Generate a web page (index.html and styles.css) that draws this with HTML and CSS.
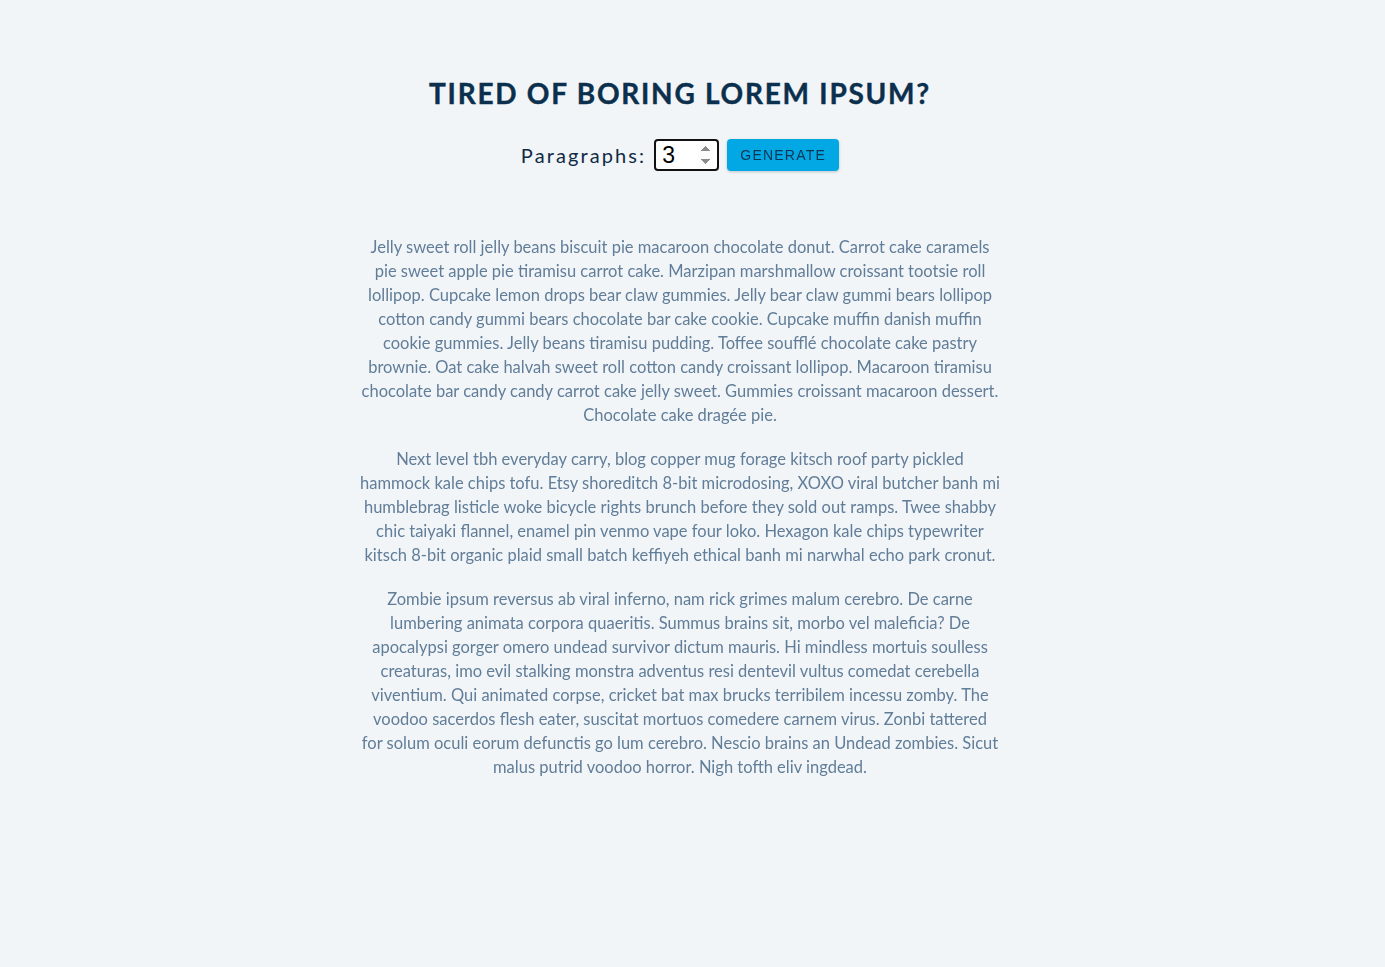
FILE: index.html
```html
<!DOCTYPE html>
<html lang="en">
<head>
<meta charset="utf-8">
<title>Lorem Ipsum Generator</title>
<link rel="stylesheet" href="styles.css">
</head>
<body>
<section class="section-center">
  <h3 class="title">tired of boring lorem ipsum?</h3>
  <form class="lorem-form">
    <label for="amount" class="label">paragraphs:</label>
    <input type="number" name="amount" id="amount" class="amount" value="3" autofocus>
    <button type="button" class="btn">generate</button>
  </form>
  <article class="lorem-text">
    <p>Jelly sweet roll jelly beans biscuit pie macaroon chocolate donut. Carrot cake caramels pie sweet apple pie tiramisu carrot cake. Marzipan marshmallow croissant tootsie roll lollipop. Cupcake lemon drops bear claw gummies. Jelly bear claw gummi bears lollipop cotton candy gummi bears chocolate bar cake cookie. Cupcake muffin danish muffin cookie gummies. Jelly beans tiramisu pudding. Toffee soufflé chocolate cake pastry brownie. Oat cake halvah sweet roll cotton candy croissant lollipop. Macaroon tiramisu chocolate bar candy candy carrot cake jelly sweet. Gummies croissant macaroon dessert. Chocolate cake dragée pie.</p>
    <p>Next level tbh everyday carry, blog copper mug forage kitsch roof party pickled hammock kale chips tofu. Etsy shoreditch 8-bit microdosing, XOXO viral butcher banh mi humblebrag listicle woke bicycle rights brunch before they sold out ramps. Twee shabby chic taiyaki flannel, enamel pin venmo vape four loko. Hexagon kale chips typewriter kitsch 8-bit organic plaid small batch keffiyeh ethical banh mi narwhal echo park cronut.</p>
    <p>Zombie ipsum reversus ab viral inferno, nam rick grimes malum cerebro. De carne lumbering animata corpora quaeritis. Summus brains sit, morbo vel maleficia? De apocalypsi gorger omero undead survivor dictum mauris. Hi mindless mortuis soulless creaturas, imo evil stalking monstra adventus resi dentevil vultus comedat cerebella viventium. Qui animated corpse, cricket bat max brucks terribilem incessu zomby. The voodoo sacerdos flesh eater, suscitat mortuos comedere carnem virus. Zonbi tattered for&nbsp;solum oculi eorum defunctis go lum cerebro. Nescio brains an Undead zombies. Sicut malus putrid voodoo horror. Nigh tofth eliv ingdead.</p>
  </article>
</section>
</body>
</html>
```
FILE: styles.css
```css
* {
  box-sizing: border-box;
}

html, body {
  margin: 0;
  padding: 0;
}

body {
  background: #f1f5f8;
  font-family: Lato, "Noto Sans", sans-serif;
  color: #102a42;
  min-height: 967px;
  padding-right: 25px;
}

.section-center {
  width: 640px;
  margin: 0 auto;
  padding-top: 76px;
  text-align: center;
}

.title {
  margin: 0;
  font-size: 28px;
  line-height: 35px;
  font-weight: 700;
  text-transform: uppercase;
  letter-spacing: 1.75px;
  color: #0b2f4c;
  -webkit-text-stroke: 0.4px #0b2f4c;
}

.lorem-form {
  margin-top: 28px;
  display: flex;
  justify-content: center;
  align-items: center;
  gap: 8px;
}

.label {
  font-size: 20px;
  letter-spacing: 2.1px;
  text-transform: capitalize;
  color: #102a42;
}

.amount {
  width: 65px;
  height: 32px;
  border: 2px solid #111;
  border-radius: 4px;
  padding: 0 4px 0 6px;
  font-family: "Liberation Sans", Arial, sans-serif;
  font-size: 23px;
  color: #000;
  background: #fff;
  outline: none;
}

.amount::-webkit-inner-spin-button,
.amount::-webkit-outer-spin-button {
  opacity: 1;
}

.btn {
  height: 32px;
  width: 112px;
  border: none;
  border-radius: 4px;
  background: #02a8e4;
  color: #0b3554;
  font-family: "Liberation Sans", Arial, sans-serif;
  font-size: 14px;
  letter-spacing: 1.2px;
  text-transform: uppercase;
  box-shadow: 0 1px 3px rgba(0, 0, 0, 0.2);
  cursor: pointer;
}

.lorem-text {
  margin-top: 64px;
}

.lorem-text p {
  margin: 0 0 20px;
  font-size: 16.5px;
  line-height: 24px;
  color: #617d98;
}
```
